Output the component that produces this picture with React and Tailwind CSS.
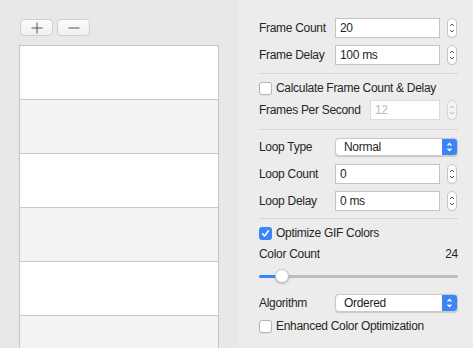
import React from "react";

const font = { fontFamily: '"Liberation Sans", Arial, sans-serif' };

function Stepper({ disabled }) {
  return (
    <div className={`w-[10px] h-[20px] rounded-[5px] border ${disabled ? "border-[#d8d8d8] bg-[#f4f4f4]" : "border-[#c6c6c6] bg-white"} flex flex-col items-center justify-center shadow-[0_0.5px_0.5px_rgba(0,0,0,0.08)]`}>
      <svg width="6" height="14" viewBox="0 0 6 14">
        <path d="M1 5 L3 3 L5 5" fill="none" stroke={disabled ? "#b8b8b8" : "#555"} strokeWidth="1" />
        <path d="M1 9 L3 11 L5 9" fill="none" stroke={disabled ? "#b8b8b8" : "#555"} strokeWidth="1" />
      </svg>
    </div>
  );
}

function Field({ label, value, labelW = "w-[76px]", inputW = "w-[105px]", disabled }) {
  return (
    <div className="flex items-center h-[20px]">
      <div className={`${labelW} shrink-0 text-[12px] tracking-[-0.3px] text-[#262626]`}>{label}</div>
      <div className={`${inputW} h-[20px] border ${disabled ? "border-[#dcdcdc] text-[#b9b9b9]" : "border-[#c4c4c4] text-[#1f1f1f]"} bg-white text-[12px] tracking-[-0.3px] pl-[4px] flex items-center`}>
        {value}
      </div>
      <div className="ml-[7px]">
        <Stepper disabled={disabled} />
      </div>
    </div>
  );
}

function Select({ label, value }) {
  return (
    <div className="flex items-center h-[18px]">
      <div className="w-[76px] shrink-0 text-[12px] tracking-[-0.3px] text-[#262626]">{label}</div>
      <div className="flex w-[123px] h-[18px] rounded-[4px] bg-white border border-[#c9c9c9] overflow-hidden shadow-[0_0.5px_1px_rgba(0,0,0,0.15)]">
        <div className="flex-1 pl-[8px] text-[12px] tracking-[-0.3px] text-[#1f1f1f] flex items-center">{value}</div>
        <div className="w-[15px] h-full bg-[#3a85f7] flex items-center justify-center">
          <svg width="7" height="12" viewBox="0 0 7 12">
            <path d="M1.5 4.5 L3.5 2.5 L5.5 4.5" fill="none" stroke="#fff" strokeWidth="1.3" />
            <path d="M1.5 7.5 L3.5 9.5 L5.5 7.5" fill="none" stroke="#fff" strokeWidth="1.3" />
          </svg>
        </div>
      </div>
    </div>
  );
}

function Check({ checked, label, className = "" }) {
  return (
    <div className={`flex items-center h-[14px] ${className}`}>
      {checked ? (
        <div className="w-[13px] h-[13px] rounded-[3px] bg-[#3a85f7] flex items-center justify-center">
          <svg width="9" height="9" viewBox="0 0 9 9">
            <path d="M1.5 4.8 L3.6 7 L7.5 1.8" fill="none" stroke="#fff" strokeWidth="1.6" strokeLinecap="round" strokeLinejoin="round" />
          </svg>
        </div>
      ) : (
        <div className="w-[13px] h-[13px] rounded-[3px] bg-white border border-[#b5b5b5] shadow-[0_0.5px_0.5px_rgba(0,0,0,0.1)]" />
      )}
      <div className="ml-[4px] text-[12px] tracking-[-0.3px] text-[#262626]">{label}</div>
    </div>
  );
}

function Sep({ h }) {
  return (
    <div className={`${h} flex items-center`}>
      <div className="w-full h-px bg-[#d6d6d6]" />
    </div>
  );
}

export default function App() {
  const rows = [0, 1, 2, 3, 4, 5];
  return (
    <div className="w-[473px] h-[348px] flex overflow-hidden bg-[#e9e9e9]" style={font}>
      <div className="w-[238px] shrink-0 pl-[19px] pt-[19px] bg-[#e8e8e8]">
        <div className="flex gap-[4px] ml-px">
          <div className="w-[33px] h-[17px] rounded-[4px] border border-[#d0d0d0] bg-gradient-to-b from-[#fbfbfb] to-[#f0f0f0] flex items-center justify-center">
            <svg width="12" height="12" viewBox="0 0 12 12">
              <path d="M6 0.5 V11.5 M0.5 6 H11.5" stroke="#555" strokeWidth="1" />
            </svg>
          </div>
          <div className="w-[33px] h-[17px] rounded-[4px] border border-[#d0d0d0] bg-gradient-to-b from-[#fbfbfb] to-[#f0f0f0] flex items-center justify-center">
            <svg width="12" height="12" viewBox="0 0 12 12">
              <path d="M0.5 6 H11.5" stroke="#555" strokeWidth="1" />
            </svg>
          </div>
        </div>
        <div className="mt-[9px] w-[200px] border border-[#c4c4c4] border-b-0">
          {rows.map((i) => (
            <div
              key={i}
              className={`h-[54px] border-b border-[#c9c9c9] ${i % 2 === 0 ? "bg-white" : "bg-[#f3f3f3]"}`}
            />
          ))}
        </div>
      </div>
      <div className="flex-1 pl-[21px] pr-[15px] pt-[18px] bg-[#ececec] flex flex-col">
        <Field label="Frame Count" value="20" />
        <div className="mt-[7px]">
          <Field label="Frame Delay" value="100 ms" />
        </div>
        <Sep h="h-[16px]" />
        <Check label="Calculate Frame Count & Delay" />
        <div className="mt-[5px]">
          <Field label="Frames Per Second" value="12" labelW="w-[111px]" inputW="w-[70px]" disabled />
        </div>
        <Sep h="h-[18px]" />
        <Select label="Loop Type" value="Normal" />
        <div className="mt-[8px]">
          <Field label="Loop Count" value="0" />
        </div>
        <div className="mt-[7px]">
          <Field label="Loop Delay" value="0 ms" />
        </div>
        <Sep h="h-[14px]" />
        <Check checked label="Optimize GIF Colors" className="mt-[1px]" />
        <div className="mt-[7px] h-[14px] flex items-center justify-between text-[12px] tracking-[-0.3px] text-[#262626]">
          <span>Color Count</span>
          <span>24</span>
        </div>
        <div className="mt-[7px] h-[16px] relative flex items-center">
          <div className="w-full h-[3px] rounded-full bg-[#bdbdbd] flex">
            <div className="w-[22px] h-full rounded-full bg-[#3a85f7]" />
          </div>
          <div className="absolute left-[16px] top-[1px] w-[14px] h-[14px] rounded-full bg-white border border-[#c8c8c8] shadow-[0_1px_2px_rgba(0,0,0,0.25)]" />
        </div>
        <div className="mt-[10px]">
          <Select label="Algorithm" value="Ordered" />
        </div>
        <Check label="Enhanced Color Optimization" className="mt-[7px]" />
      </div>
    </div>
  );
}
